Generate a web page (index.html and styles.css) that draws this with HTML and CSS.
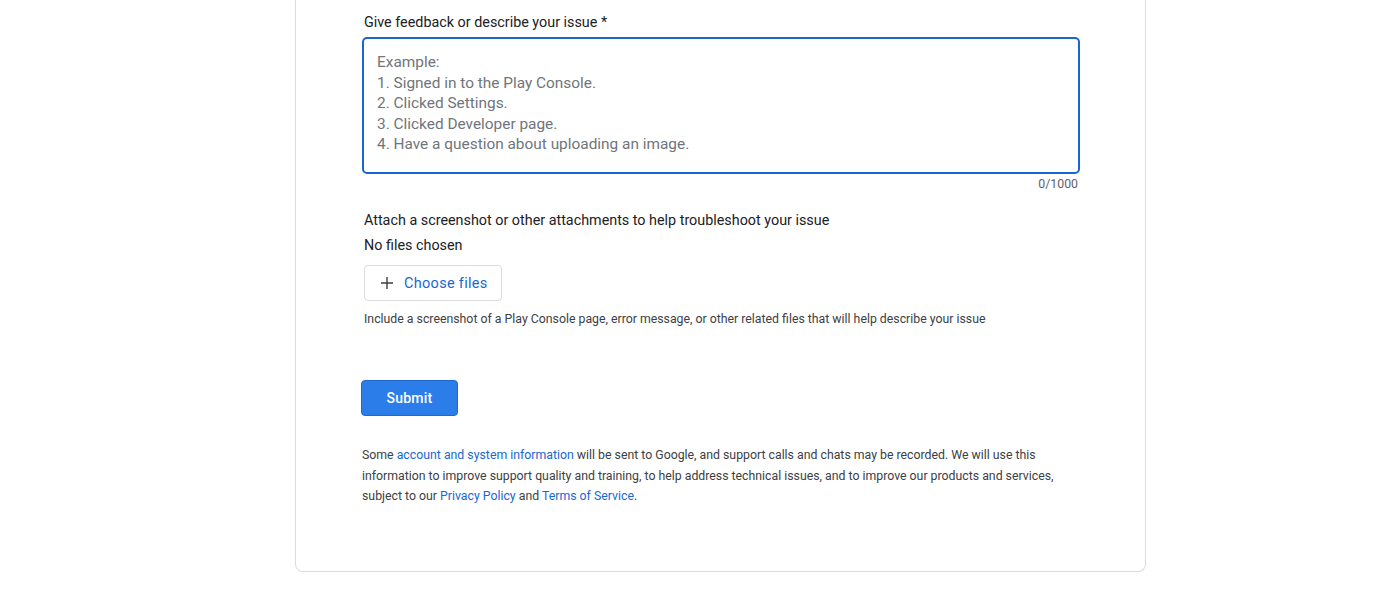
FILE: index.html
```html
<!DOCTYPE html>
<html>
<head>
<meta charset="utf-8">
<link rel="stylesheet" href="styles.css">
</head>
<body>
<div class="page">
  <div class="card">
    <label class="label">Give feedback or describe your issue *</label>
    <div class="textarea">
      <div>Example:</div>
      <div>1. Signed in to the Play Console.</div>
      <div>2. Clicked Settings.</div>
      <div>3. Clicked Developer page.</div>
      <div>4. Have a question about uploading an image.</div>
    </div>
    <div class="counter">0/1000</div>

    <div class="label attach">Attach a screenshot or other attachments to help troubleshoot your issue</div>
    <div class="nofiles">No files chosen</div>
    <button class="choose">
      <svg width="14" height="14" viewBox="0 0 14 14"><path d="M7 1v12M1 7h12" stroke="#3c4043" stroke-width="1.4" fill="none"/></svg>
      <span>Choose files</span>
    </button>
    <div class="helper">Include a screenshot of a Play Console page, error message, or other related files that will help describe your issue</div>

    <button class="submit">Submit</button>

    <p class="legal">Some <a href="#">account and system information</a> will be sent to Google, and support calls and chats may be recorded. We will use this information to improve support quality and training, to help address technical issues, and to improve our products and services, subject to our <a href="#">Privacy Policy</a> and <a href="#">Terms of Service</a>.</p>
  </div>
</div>
</body>
</html>
```
FILE: styles.css
```css
html, body {
  margin: 0;
  padding: 0;
  background: #fff;
}
body {
  font-family: Roboto, "Liberation Sans", Arial, sans-serif;
  color: #202124;
}
.page {
  padding-left: 295px;
}
.card {
  width: 718px;
  padding: 13px 65px 64px 66px;
  border: 1px solid #dadce0;
  border-top: none;
  border-radius: 0 0 8px 8px;
  display: flex;
  flex-direction: column;
  align-items: flex-start;
}
.label {
  display: block;
  font-size: 14.35px;
  line-height: 20px;
  color: #202124;
  padding-left: 2px;
}
.textarea {
  margin-top: 4px;
  box-sizing: border-box;
  width: 718px;
  height: 137px;
  border: 2px solid #1a66d1;
  border-radius: 5px;
  padding: 13px 13px;
  font-size: 15.4px;
  line-height: 20.5px;
  color: #70757a;
}
.counter {
  align-self: flex-end;
  font-size: 12.3px;
  line-height: 16px;
  color: #5f6368;
  margin-top: 2px;
  padding-right: 2px;
}
.attach {
  margin-top: 19px;
}
.nofiles {
  font-size: 14.35px;
  line-height: 20px;
  margin-top: 5px;
  padding-left: 2px;
}
.choose {
  margin-top: 9px;
  margin-left: 2px;
  box-sizing: border-box;
  height: 36px;
  width: 138px;
  border: 1px solid #dadce0;
  border-radius: 4px;
  background: #fff;
  display: flex;
  align-items: center;
  gap: 10px;
  padding: 0 0 0 15px;
  font-family: inherit;
  font-size: 14.5px;
  font-weight: 400;
  color: #1967d2;
  letter-spacing: 0.3px;
}
.helper {
  margin-top: 10px;
  font-size: 12.3px;
  line-height: 16px;
  color: #3c4043;
  padding-left: 2px;
}
.submit {
  margin-top: 53px;
  margin-left: -1px;
  box-sizing: border-box;
  width: 97px;
  height: 36px;
  background: #2b7de9;
  border: 1px solid #1f69cc;
  border-radius: 4px;
  color: #fff;
  font-family: inherit;
  font-size: 14px;
  font-weight: 500;
  letter-spacing: 0.2px;
}
.legal {
  margin: 29px 0 0 0;
  font-size: 12.3px;
  line-height: 20.5px;
  color: #3c4043;
  max-width: 710px;
}
.legal a {
  color: #1967d2;
  text-decoration: none;
}
```
